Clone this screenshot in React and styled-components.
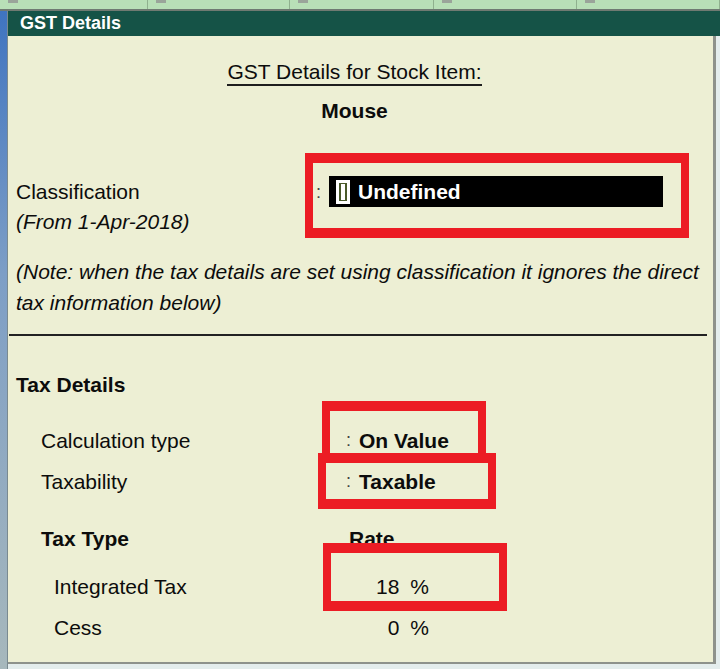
import styled, { createGlobalStyle } from "styled-components";

const Global = createGlobalStyle`
  html, body {
    margin: 0;
    padding: 0;
    background: #e4eded;
  }
  body {
    font-family: "Liberation Sans", Arial, sans-serif;
  }
`;

const Screen = styled.div`
  width: 720px;
  height: 669px;
  display: flex;
  flex-direction: column;
  overflow: hidden;
`;

const TopStrip = styled.div`
  height: 9px;
  display: grid;
  grid-template-columns: 148px 142px 144px 143px 1fr;
  background: #b8dfb7;
  border-bottom: 2px solid #6f7a72;
`;

const StripCell = styled.div`
  position: relative;
  border-right: 1px solid #8fb08e;
  &::before {
    content: "";
    position: absolute;
    left: 8px;
    top: 0;
    width: 10px;
    height: 3px;
    background: #9aa49a;
  }
`;

const Main = styled.div`
  flex: 1;
  display: flex;
`;

const Desktop = styled.div`
  width: 7px;
  background: linear-gradient(#3f74c0, #7d9ec6 40%, #a7b8bc);
  border-right: 1px solid #7a8a90;
`;

const Window = styled.div`
  flex: 1;
  display: flex;
  flex-direction: column;
`;

const TitleBar = styled.div`
  height: 25px;
  background: #155347;
  color: #fff;
  font-weight: bold;
  font-size: 18px;
  line-height: 25px;
  padding-left: 12px;
`;

const Panel = styled.div`
  position: relative;
  width: 705px;
  height: 626px;
  background: #edefd4;
  border-right: 3px solid #8e928c;
  border-bottom: 2px solid #8e928c;
  font-size: 21px;
  color: #0c0c0c;
`;

const Center = styled.div`
  display: flex;
  flex-direction: column;
  align-items: center;
  padding-right: 12px;
`;

const Heading = styled.div`
  margin-top: 23px;
  line-height: 25px;
  border-bottom: 2px solid #1e1e1e;
`;

const ItemName = styled.div`
  margin-top: 12px;
  line-height: 26px;
  font-weight: bold;
`;

const ClassRow = styled.div`
  margin-top: 53px;
  padding-left: 8px;
  display: grid;
  grid-template-columns: 300px 1fr;
  line-height: 30px;
`;

const Label = styled.div`
  font-style: ${(p) => (p.$italic ? "italic" : "normal")};
`;

const FieldLine = styled.div`
  display: flex;
  align-items: center;
  height: 30px;
`;

const Colon = styled.span`
  width: 13px;
  font-size: 18px;
  font-weight: normal;
  color: #444;
`;

const Field = styled.div`
  width: 334px;
  height: 31px;
  margin-top: -1px;
  background: #000;
  color: #fff;
  font-weight: bold;
  display: flex;
  align-items: center;
  padding-left: 7px;
  box-sizing: border-box;
`;

const Cursor = styled.span`
  width: 14px;
  height: 24px;
  background: #fff;
  margin-right: 8px;
  display: flex;
  align-items: center;
  justify-content: center;
  &::after {
    content: "";
    width: 4px;
    height: 16px;
    border: 1.5px solid #4a5a2a;
    border-left-width: 2px;
    border-right-width: 2px;
  }
`;

const Note = styled.div`
  margin-top: 19px;
  padding-left: 8px;
  line-height: 31px;
  font-style: italic;
`;

const Rule = styled.div`
  margin: 16px 6px 0 1px;
  height: 2px;
  background: #222;
`;

const SectionTitle = styled.div`
  margin-top: 34px;
  padding-left: 8px;
  line-height: 30px;
  font-weight: bold;
`;

const InfoGrid = styled.div`
  margin-top: ${(p) => p.$top}px;
  padding-left: 33px;
  display: grid;
  grid-template-columns: 305px 1fr;
  grid-auto-rows: 41px;
  align-items: center;
`;

const Value = styled.div`
  font-weight: bold;
  display: flex;
  align-items: center;
`;

const RateGrid = styled.div`
  margin-top: ${(p) => p.$top}px;
  padding-left: 33px;
  display: grid;
  grid-template-columns: 308px 80px;
  grid-auto-rows: 41px;
  align-items: center;
`;

const RateLabel = styled.div`
  padding-left: ${(p) => (p.$sub ? 13 : 0)}px;
  font-weight: ${(p) => (p.$bold ? "bold" : "normal")};
`;

const RateValue = styled.div`
  display: flex;
  justify-content: ${(p) => (p.$head ? "flex-start" : "flex-end")};
  font-weight: ${(p) => (p.$bold ? "bold" : "normal")};
`;

const Pct = styled.span`
  margin-left: 11px;
`;

const Mark = styled.div`
  position: absolute;
  left: ${(p) => p.$x}px;
  top: ${(p) => p.$y}px;
  width: ${(p) => p.$w}px;
  height: ${(p) => p.$h}px;
  border: solid #ec1c24;
  border-width: 10px 8px;
  box-sizing: border-box;
  pointer-events: none;
`;

export default function App() {
  return (
    <>
      <Global />
      <Screen>
        <TopStrip>
          <StripCell />
          <StripCell />
          <StripCell />
          <StripCell />
          <StripCell />
        </TopStrip>
        <Main>
          <Desktop />
          <Window>
            <TitleBar>GST Details</TitleBar>
            <Panel>
              <Center>
                <Heading>GST Details for Stock Item:</Heading>
                <ItemName>Mouse</ItemName>
              </Center>

              <ClassRow>
                <div>
                  <Label>Classification</Label>
                  <Label $italic>(From 1-Apr-2018)</Label>
                </div>
                <FieldLine>
                  <Colon>:</Colon>
                  <Field>
                    <Cursor />
                    Undefined
                  </Field>
                </FieldLine>
              </ClassRow>

              <Note>
                (Note: when the tax details are set using classification it ignores the direct
                <br />
                tax information below)
              </Note>

              <Rule />

              <SectionTitle>Tax Details</SectionTitle>

              <InfoGrid $top={20}>
                <div>Calculation type</div>
                <Value>
                  <Colon>:</Colon>On Value
                </Value>
                <div>Taxability</div>
                <Value>
                  <Colon>:</Colon>Taxable
                </Value>
              </InfoGrid>

              <RateGrid $top={16}>
                <RateLabel $bold>Tax Type</RateLabel>
                <RateValue $head $bold>Rate</RateValue>
              </RateGrid>
              <RateGrid $top={7}>
                <RateLabel $sub>Integrated Tax</RateLabel>
                <RateValue>
                  18<Pct>%</Pct>
                </RateValue>
                <RateLabel $sub>Cess</RateLabel>
                <RateValue>
                  0<Pct>%</Pct>
                </RateValue>
              </RateGrid>

              <Mark $x={297} $y={117} $w={384} $h={85} />
              <Mark $x={314} $y={365} $w={164} $h={62} />
              <Mark $x={310} $y={417} $w={178} $h={56} />
              <Mark $x={315} $y={507} $w={184} $h={68} />
            </Panel>
          </Window>
        </Main>
      </Screen>
    </>
  );
}
